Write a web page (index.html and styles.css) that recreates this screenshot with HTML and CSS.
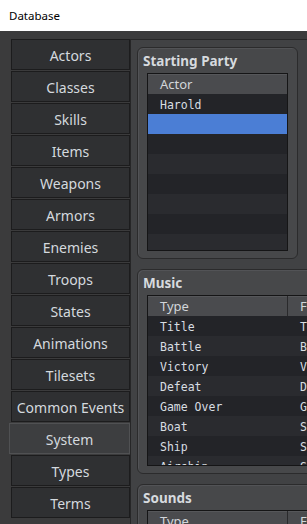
FILE: index.html
```html
<!DOCTYPE html>
<html>
<head>
<meta charset="utf-8">
<link rel="stylesheet" href="styles.css">
</head>
<body>
<div class="titlebar">Database</div>
<div class="main">
  <nav class="sidebar">
    <div class="tab">Actors</div>
    <div class="tab">Classes</div>
    <div class="tab">Skills</div>
    <div class="tab">Items</div>
    <div class="tab">Weapons</div>
    <div class="tab">Armors</div>
    <div class="tab">Enemies</div>
    <div class="tab">Troops</div>
    <div class="tab">States</div>
    <div class="tab">Animations</div>
    <div class="tab">Tilesets</div>
    <div class="tab">Common Events</div>
    <div class="tab active">System</div>
    <div class="tab">Types</div>
    <div class="tab">Terms</div>
  </nav>
  <section class="content">
    <div class="group party">
      <div class="group-title">Starting Party</div>
      <div class="list">
        <div class="row head"><span class="cell">Actor</span></div>
        <div class="row"><span class="cell">Harold</span></div>
        <div class="row sel"></div>
        <div class="row"></div>
        <div class="row alt"></div>
        <div class="row"></div>
        <div class="row alt"></div>
        <div class="row"></div>
        <div class="row alt"></div>
      </div>
    </div>
    <div class="group wide">
      <div class="group-title">Music</div>
      <div class="list tall">
        <div class="row head"><span class="cell c1">Type</span><span class="cell">File</span></div>
        <div class="row"><span class="cell c1">Title</span><span class="cell">Theme6</span></div>
        <div class="row alt"><span class="cell c1">Battle</span><span class="cell">Battle1</span></div>
        <div class="row"><span class="cell c1">Victory</span><span class="cell">Victory1</span></div>
        <div class="row alt"><span class="cell c1">Defeat</span><span class="cell">Defeat1</span></div>
        <div class="row"><span class="cell c1">Game Over</span><span class="cell">Gameover1</span></div>
        <div class="row alt"><span class="cell c1">Boat</span><span class="cell">Ship1</span></div>
        <div class="row"><span class="cell c1">Ship</span><span class="cell">Ship2</span></div>
        <div class="row alt"><span class="cell c1">Airship</span><span class="cell">Ship3</span></div>
      </div>
    </div>
    <div class="group wide">
      <div class="group-title">Sounds</div>
      <div class="list">
        <div class="row head"><span class="cell c1">Type</span><span class="cell">File</span></div>
        <div class="row"><span class="cell c1">Cursor</span><span class="cell">Cursor1</span></div>
      </div>
    </div>
  </section>
</div>
</body>
</html>
```
FILE: styles.css
```css
html, body {
  margin: 0;
  padding: 0;
}
body {
  width: 307px;
  height: 524px;
  overflow: hidden;
  background: #3b3b3c;
  font-family: "Noto Sans", "Open Sans", sans-serif;
}
.titlebar {
  height: 31px;
  background: #ffffff;
  color: #000000;
  font-size: 11.5px;
  line-height: 31px;
  padding-left: 9px;
}
.main {
  display: flex;
  height: 493px;
}
.sidebar {
  width: 130px;
  flex: none;
  box-sizing: border-box;
  padding: 8px 0 0 11px;
  display: flex;
  flex-direction: column;
  gap: 1px;
}
.tab {
  height: 31px;
  flex: none;
  box-sizing: border-box;
  border: 1px solid #1c1c1d;
  background: #2f3032;
  color: #d4d9de;
  font-size: 14px;
  padding-top: 2px;
  display: flex;
  align-items: center;
  justify-content: center;
}
.tab.active {
  margin-left: -2px;
  background: #3d3e40;
  border-color: #505153;
}
.content {
  flex: 1;
  min-width: 0;
  margin-top: 8px;
  border-top: 1px solid #262627;
  border-left: 1px solid #262627;
  background: #414244;
  padding: 7px 0 0 6px;
  overflow: hidden;
}
.group {
  border: 1px solid #2b2b2c;
  border-radius: 6px;
  background: #47484a;
  padding: 0 9px 7px 9px;
  margin-bottom: 10px;
  box-shadow: inset 1px 1px 0 #525356;
}
.party {
  width: 141px;
}
.wide {
  width: 400px;
}
.group-title {
  height: 25px;
  line-height: 26px;
  margin-left: -4px;
  font-size: 13.5px;
  font-weight: bold;
  color: #d6dade;
}
.list {
  border: 1px solid #151516;
  background: #232428;
  overflow: hidden;
  height: 176px;
}
.list.tall {
  height: 169px;
}
.row {
  height: 20px;
  display: flex;
  background: #232428;
}
.row.alt {
  background: #2a2b2f;
}
.row.head {
  background: #4a4b4e;
  box-shadow: inset 0 1px 0 #56575a;
}
.row.sel {
  background: #4b7ed5;
}
.cell {
  box-sizing: border-box;
  padding-left: 12px;
  line-height: 22px;
  height: 20px;
  font-family: "DejaVu Sans Mono", monospace;
  font-size: 11.5px;
  color: #d8dde2;
  white-space: nowrap;
}
.head .cell {
  font-family: "Noto Sans", "Open Sans", sans-serif;
  font-size: 13px;
  line-height: 20px;
  color: #d2d6da;
}
.c1 {
  width: 140px;
  flex: none;
  padding-left: 12px;
}
.head .c1 {
  border-right: 1px solid #2a2a2c;
}
```
